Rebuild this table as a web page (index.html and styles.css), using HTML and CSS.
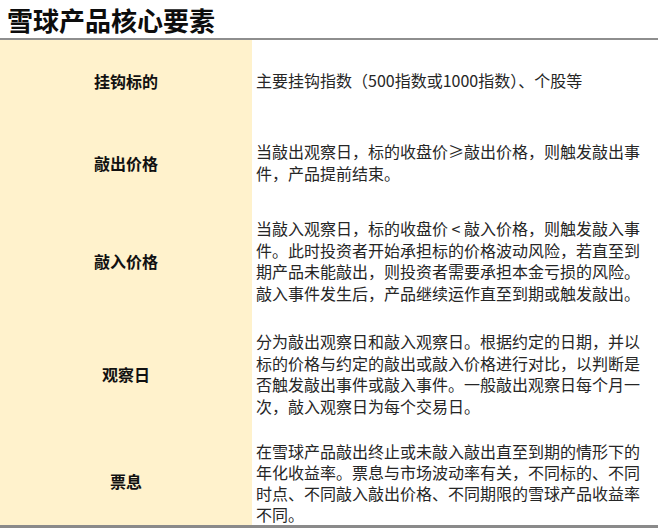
FILE: index.html
```html
<!DOCTYPE html>
<html lang="zh-CN">
<head>
<meta charset="utf-8">
<link rel="stylesheet" href="styles.css">
</head>
<body>
<div class="page">
  <h1 class="title">雪球产品核心要素</h1>
  <div class="table">
    <div class="row r1">
      <div class="label">挂钩标的</div>
      <div class="text">主要挂钩指数（500指数或1000指数）、个股等</div>
    </div>
    <div class="row r2">
      <div class="label">敲出价格</div>
      <div class="text">当敲出观察日，标的收盘价≥敲出价格，则触发敲出事件，产品提前结束。</div>
    </div>
    <div class="row r3">
      <div class="label">敲入价格</div>
      <div class="text">当敲入观察日，标的收盘价 &lt; 敲入价格，则触发敲入事件。此时投资者开始承担标的价格波动风险，若直至到期产品未能敲出，则投资者需要承担本金亏损的风险。敲入事件发生后，产品继续运作直至到期或触发敲出。</div>
    </div>
    <div class="row r4">
      <div class="label">观察日</div>
      <div class="text">分为敲出观察日和敲入观察日。根据约定的日期，并以标的价格与约定的敲出或敲入价格进行对比，以判断是否触发敲出事件或敲入事件。一般敲出观察日每个月一次，敲入观察日为每个交易日。</div>
    </div>
    <div class="row r5">
      <div class="label">票息</div>
      <div class="text">在雪球产品敲出终止或未敲入敲出直至到期的情形下的年化收益率。票息与市场波动率有关，不同标的、不同时点、不同敲入敲出价格、不同期限的雪球产品收益率不同。</div>
    </div>
  </div>
</div>
</body>
</html>
```

FILE: styles.css
```css
* { box-sizing: border-box; margin: 0; padding: 0; }
html, body { background: #ffffff; }
body {
  width: 660px;
  height: 531px;
  overflow: hidden;
  font-family: "Noto Sans CJK SC", "Noto Sans", sans-serif;
  color: #262626;
}
.page { width: 658px; }
.title {
  height: 40px;
  padding-left: 7px;
  padding-top: 1px;
  font-size: 26px;
  line-height: 38px;
  font-weight: 700;
  color: #0d0d0d;
  border-bottom: 2px solid #8e8e8e;
}
.table {
  border-bottom: 3px solid #8a8a8a;
  display: flex;
  flex-direction: column;
}
.row {
  display: grid;
  grid-template-columns: 252px 1fr;
}
.label {
  background: #fff2cc;
  display: flex;
  align-items: center;
  justify-content: center;
  font-size: 16px;
  font-weight: 700;
  color: #111;
}
.text {
  display: flex;
  align-items: center;
  padding-left: 4px;
  padding-right: 2px;
  font-size: 16px;
  line-height: 21.5px;
  color: #262626;
  max-width: 400px;
}
.r1 { height: 81px; }
.r2 { height: 83px; }
.r3 { height: 114px; }
.r4 { height: 112px; }
.r5 { height: 95px; }
.r5 .label { padding-top: 7px; }
.r5 .text { align-items: flex-start; padding-top: 11px; line-height: 21px; }
```
